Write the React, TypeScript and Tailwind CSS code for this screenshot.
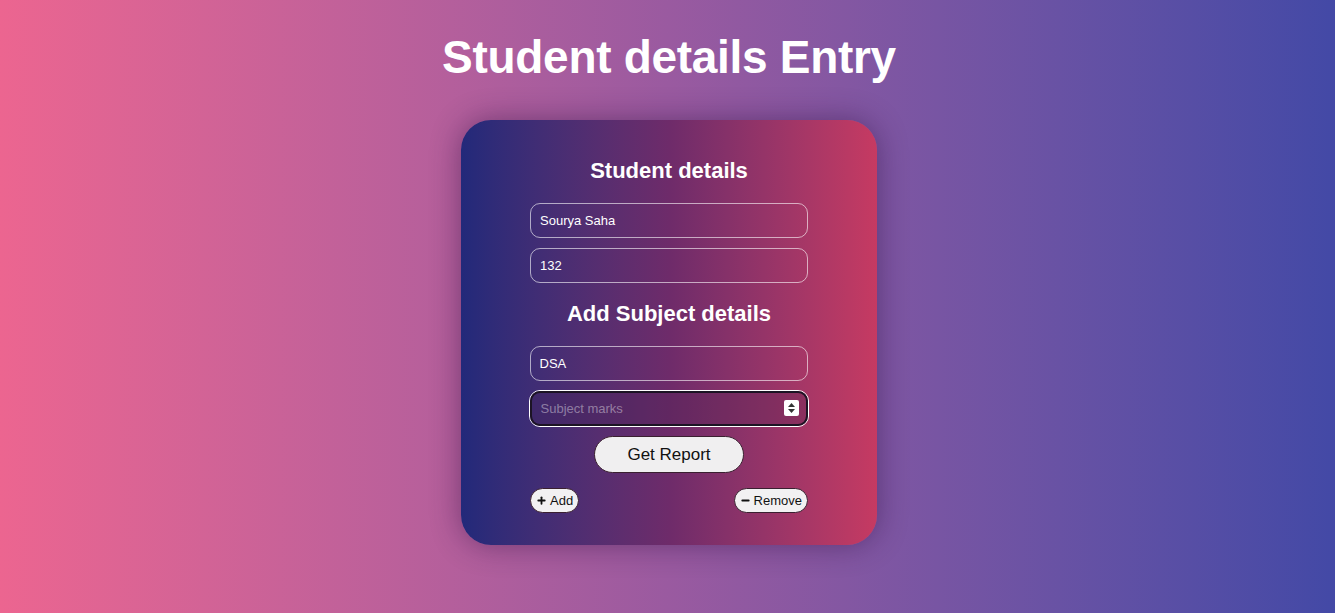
import { Plus, Minus } from "lucide-react";

const font = { fontFamily: '"Liberation Sans", Arial, sans-serif' };

export default function App() {
  return (
    <div
      className="w-full min-h-[613px] flex flex-col items-center pl-[3px] bg-gradient-to-r from-[#ec6590] via-[#9a5aa0] to-[#4349a6]"
      style={font}
    >
      <h1 className="mt-[29px] text-[46px] leading-[56px] font-bold text-white tracking-[-0.3px]">
        Student details Entry
      </h1>

      {/* Card */}
      <div className="mt-[35px] w-[416px] h-[425px] rounded-[30px] bg-gradient-to-r from-[#22297a] via-[#6e2b6a] to-[#c63a62] shadow-[0_0_30px_rgba(40,10,60,0.45)] flex flex-col items-center pt-[38px]">
        <h2 className="text-[22px] leading-[26px] font-bold text-white">Student details</h2>

        <div className="mt-[19px] flex flex-col gap-[10px]">
          <input
            className="w-[278px] h-[35px] rounded-[10px] border border-white/60 bg-transparent px-[9px] text-[13px] text-white outline-none"
            defaultValue="Sourya Saha"
          />
          <input
            className="w-[278px] h-[35px] rounded-[10px] border border-white/60 bg-transparent px-[9px] text-[13px] text-white outline-none"
            defaultValue="132"
          />
        </div>

        <h2 className="mt-[18px] text-[22px] leading-[26px] font-bold text-white">Add Subject details</h2>

        <div className="mt-[19px] flex flex-col gap-[9px]">
          <input
            className="w-[278px] h-[35px] rounded-[10px] border border-white/60 bg-transparent px-[9px] text-[13px] text-white outline-none"
            defaultValue="DSA"
          />
          <div className="relative w-[280px] h-[37px] -ml-px rounded-[11px] border-[1.5px] border-white">
            <input
              className="w-full h-full rounded-[10px] border-2 border-[#1c1424] bg-[#3c1d48]/25 px-[9px] text-[13px] text-white outline-none placeholder:text-white/40"
              placeholder="Subject marks"
            />
            <div className="absolute right-[9px] top-[9px] w-[15px] h-[16px] bg-white rounded-[2px] flex items-center justify-center">
              <svg width="9" height="12" viewBox="0 0 9 12">
                <path d="M4.5 1 L8 5 H1 Z" fill="#333" />
                <path d="M4.5 11 L8 7 H1 Z" fill="#333" />
              </svg>
            </div>
          </div>
        </div>

        <button className="mt-[9px] w-[150px] h-[37px] rounded-full bg-[#f0eff0] border border-[#3a2030] text-[17px] text-[#111]">
          Get Report
        </button>

        <div className="mt-[15px] w-[278px] flex justify-between">
          <button className="h-[25px] px-[5px] rounded-full bg-[#f2f1f2] border border-[#3a2030] flex items-center gap-[3px] text-[13px] text-[#111]">
            <Plus size={11} strokeWidth={4} />
            Add
          </button>
          <button className="h-[25px] px-[5px] rounded-full bg-[#f2f1f2] border border-[#3a2030] flex items-center gap-[3px] text-[13px] text-[#111]">
            <Minus size={11} strokeWidth={4} />
            Remove
          </button>
        </div>
      </div>
    </div>
  );
}
